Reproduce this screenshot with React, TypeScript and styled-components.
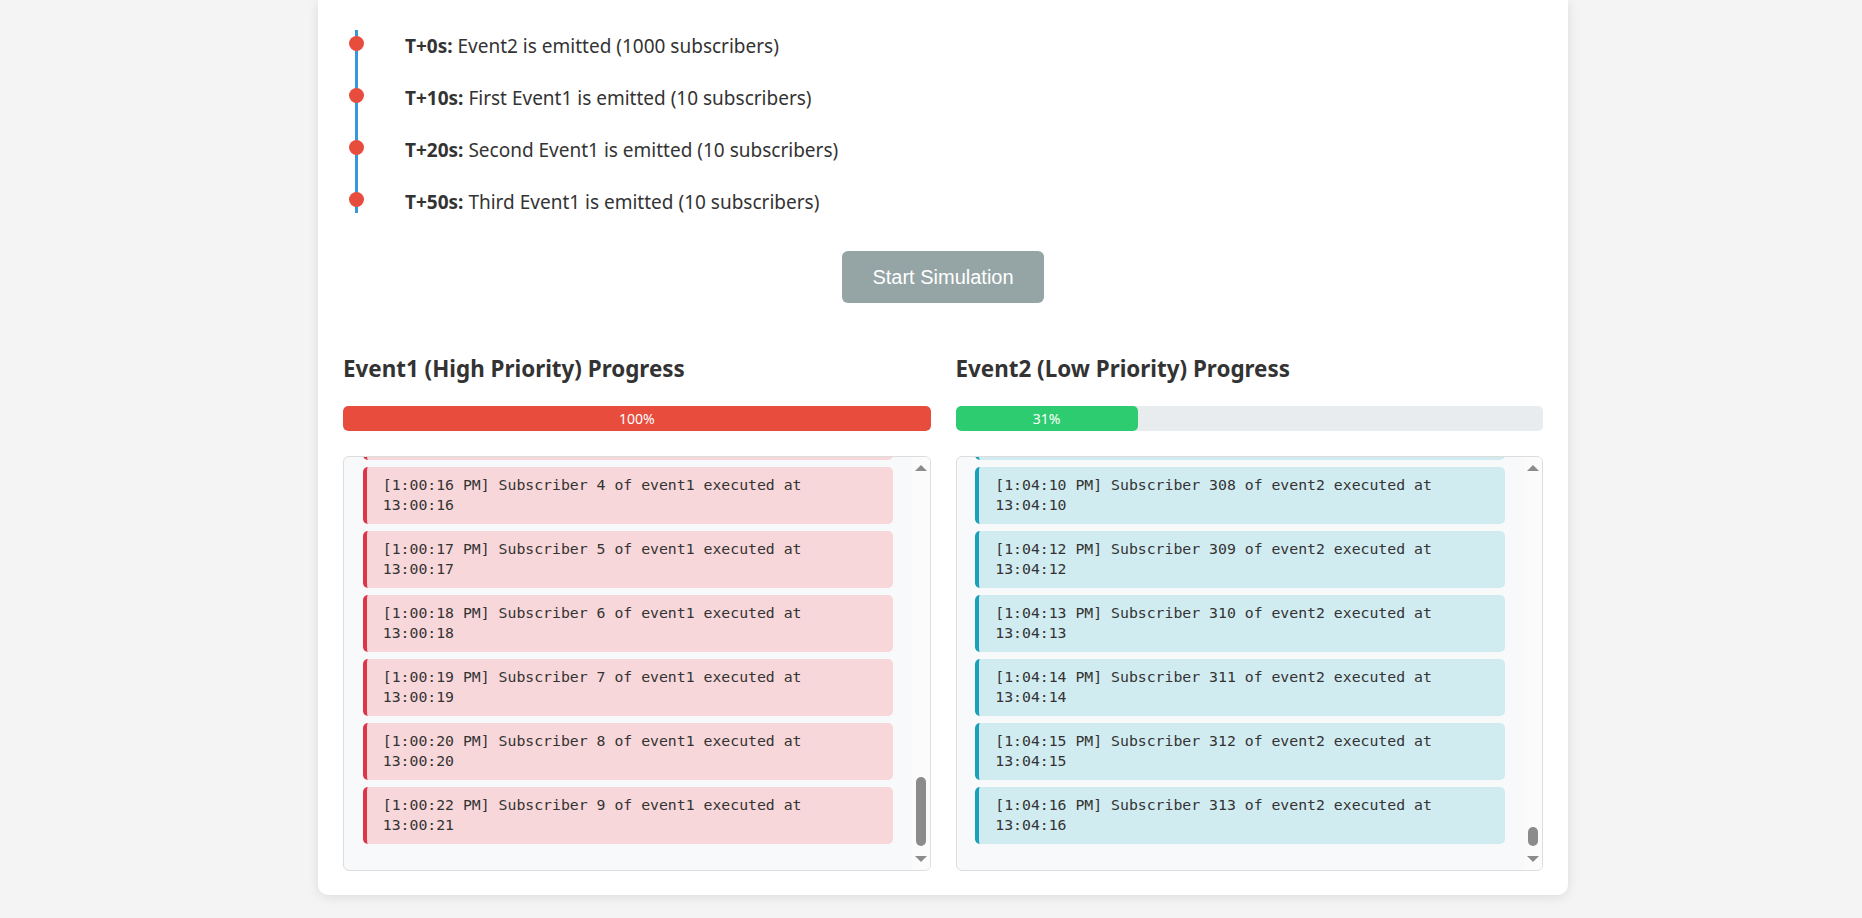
import { useLayoutEffect, useRef, useState } from 'react'
import styled, { createGlobalStyle } from 'styled-components'

type Priority = 'high' | 'low'

type LogLine = {
  id: number
  stamp: string
  sub: number
  exec: string
}

const pad = (n: number) => String(n).padStart(2, '0')

// seconds counted from 13:00:00
const clock12 = (sec: number) => {
  const total = 13 * 3600 + sec
  const h = Math.floor(total / 3600)
  const m = Math.floor((total % 3600) / 60)
  const s = total % 60
  const h12 = h % 12 === 0 ? 12 : h % 12
  return `${h12}:${pad(m)}:${pad(s)} ${h >= 12 ? 'PM' : 'AM'}`
}
const clock24 = (sec: number) => {
  const total = 13 * 3600 + sec
  const h = Math.floor(total / 3600)
  const m = Math.floor((total % 3600) / 60)
  const s = total % 60
  return `${pad(h)}:${pad(m)}:${pad(s)}`
}

const buildLog = (count: number, firstSub: number, tail: [number, number][], wrapAt?: number) => {
  const lines: LogLine[] = []
  const head = count - tail.length
  const start = tail[0][0]
  for (let i = 0; i < count; i++) {
    let logged: number
    let ran: number
    if (i >= head) {
      ;[logged, ran] = tail[i - head]
    } else {
      logged = start - (head - i)
      ran = logged
    }
    const sub = wrapAt ? (firstSub + i) % wrapAt : firstSub + i
    lines.push({ id: i, stamp: clock12(logged), sub, exec: clock24(ran) })
  }
  return lines
}

const event1Log = buildLog(34, 6, [
  [16, 16],
  [17, 17],
  [18, 18],
  [19, 19],
  [20, 20],
  [22, 21],
], 10)

const event2Log = buildLog(128, 186, [
  [250, 250],
  [252, 252],
  [253, 253],
  [254, 254],
  [255, 255],
  [256, 256],
])

const timeline = [
  { at: 'T+0s:', text: 'Event2 is emitted (1000 subscribers)' },
  { at: 'T+10s:', text: 'First Event1 is emitted (10 subscribers)' },
  { at: 'T+20s:', text: 'Second Event1 is emitted (10 subscribers)' },
  { at: 'T+50s:', text: 'Third Event1 is emitted (10 subscribers)' },
]

const panels = [
  { key: 'event1', title: 'Event1 (High Priority) Progress', percent: 100, color: '#e74c3c', priority: 'high' as Priority, log: event1Log },
  { key: 'event2', title: 'Event2 (Low Priority) Progress', percent: 31, color: '#2ecc71', priority: 'low' as Priority, log: event2Log },
]

const LogPanel = ({ priority, log, event }: { priority: Priority; log: LogLine[]; event: string }) => {
  const viewRef = useRef<HTMLDivElement>(null)
  const trackRef = useRef<HTMLDivElement>(null)
  const [thumb, setThumb] = useState(19)

  // keep the newest entries in view, like a live log
  useLayoutEffect(() => {
    const view = viewRef.current
    const track = trackRef.current
    if (!view || !track) return
    view.scrollTop = view.scrollHeight
    const size = (track.clientHeight * view.clientHeight) / view.scrollHeight
    setThumb(Math.max(19, Math.round(size)))
  }, [])

  return (
    <LogBox>
      <LogViewport ref={viewRef}>
        {log.map((l) => (
          <LogEntry key={l.id} $priority={priority}>
            [{l.stamp}] Subscriber {l.sub} of {event} executed at {l.exec}
          </LogEntry>
        ))}
      </LogViewport>
      <ScrollRail>
        <RailButton>
          <Arrow $dir="up" />
        </RailButton>
        <RailTrack ref={trackRef}>
          <RailThumb style={{ height: thumb }} />
        </RailTrack>
        <RailButton>
          <Arrow $dir="down" />
        </RailButton>
      </ScrollRail>
    </LogBox>
  )
}

export default function App() {
  return (
    <>
      <GlobalStyle />
      <Page>
        <Card>
          <Timeline>
            {timeline.map((t) => (
              <TimelineItem key={t.at}>
                <strong>{t.at}</strong> {t.text}
              </TimelineItem>
            ))}
          </Timeline>
          <ButtonRow>
            <StartButton disabled>Start Simulation</StartButton>
          </ButtonRow>
          <Columns>
            {panels.map((p) => (
              <Column key={p.key}>
                <PanelTitle>{p.title}</PanelTitle>
                <ProgressTrack>
                  <ProgressFill $color={p.color} style={{ width: `${p.percent}%` }}>
                    {p.percent}%
                  </ProgressFill>
                </ProgressTrack>
                <LogPanel priority={p.priority} log={p.log} event={p.key} />
              </Column>
            ))}
          </Columns>
        </Card>
      </Page>
    </>
  )
}

const GlobalStyle = createGlobalStyle`
  html, body {
    margin: 0;
    padding: 0;
    background: #f4f4f4;
  }
  body {
    font-family: 'Noto Sans', 'Open Sans', sans-serif;
    color: #333;
  }
`

const Page = styled.div`
  display: flex;
  justify-content: center;
  align-items: flex-start;
  padding-left: 24px;
  min-height: 918px;
  box-sizing: border-box;
`

const Card = styled.div`
  width: 1250px;
  box-sizing: border-box;
  background: #fff;
  border-radius: 0 0 10px 10px;
  box-shadow: 0 2px 12px rgba(0, 0, 0, 0.1);
  padding: 30px 25px 24px;
`

const Timeline = styled.ul`
  list-style: none;
  margin: 0;
  padding: 0 0 0 62px;
  position: relative;

  &::before {
    content: '';
    position: absolute;
    left: 12px;
    top: 0;
    bottom: 3px;
    width: 3px;
    background: #3498db;
  }
`

const TimelineItem = styled.li`
  position: relative;
  font-size: 19px;
  line-height: 28px;
  padding-top: 2px;
  margin-bottom: 22px;

  &:last-child {
    margin-bottom: 0;
  }

  &::before {
    content: '';
    position: absolute;
    left: -56px;
    top: 6px;
    width: 15px;
    height: 15px;
    border-radius: 50%;
    background: #e74c3c;
  }

  strong {
    font-weight: 700;
  }
`

const ButtonRow = styled.div`
  display: flex;
  justify-content: center;
  margin-top: 35px;
`

const StartButton = styled.button`
  font-family: 'Liberation Sans', Arial, sans-serif;
  font-size: 20px;
  line-height: 22px;
  padding: 15px 30px;
  border: none;
  border-radius: 6px;
  background: #95a5a6;
  color: #fff;
`

const Columns = styled.div`
  display: grid;
  grid-template-columns: 1fr 1fr;
  gap: 25px;
  margin-top: 52px;
`

const Column = styled.div`
  display: flex;
  flex-direction: column;
  min-width: 0;
`

const PanelTitle = styled.h3`
  margin: 0 0 23px;
  font-size: 22.4px;
  line-height: 28px;
  font-weight: 700;
  color: #333;
`

const ProgressTrack = styled.div`
  height: 25px;
  background: #e9ecef;
  border-radius: 5px;
  overflow: hidden;
`

const ProgressFill = styled.div<{ $color: string }>`
  height: 100%;
  background: ${(p) => p.$color};
  border-radius: 5px;
  color: #fff;
  font-size: 14px;
  display: flex;
  align-items: center;
  justify-content: center;
`

const LogBox = styled.div`
  margin-top: 25px;
  height: 415px;
  box-sizing: border-box;
  display: flex;
  border: 1px solid #ddd;
  border-radius: 6px;
  background: #f8f9fa;
  overflow: hidden;
`

const LogViewport = styled.div`
  flex: 1;
  min-width: 0;
  overflow: hidden;
  padding: 18.75px;
`

const LogEntry = styled.div<{ $priority: Priority }>`
  font-family: 'DejaVu Sans Mono', 'Liberation Mono', monospace;
  font-size: 14.8px;
  line-height: 20.5px;
  color: #333;
  padding: 8px 16px;
  margin-bottom: 7px;
  border-radius: 5px;
  border-left: 4px solid ${(p) => (p.$priority === 'high' ? '#dc3545' : '#17a2b8')};
  background: ${(p) => (p.$priority === 'high' ? '#f8d7da' : '#d1ecf1')};
`

const ScrollRail = styled.div`
  width: 18px;
  flex-shrink: 0;
  display: flex;
  flex-direction: column;
  background: #fbfbfb;
`

const RailButton = styled.div`
  height: 22px;
  display: flex;
  align-items: center;
  justify-content: center;
`

const Arrow = styled.div<{ $dir: 'up' | 'down' }>`
  width: 0;
  height: 0;
  border-left: 6px solid transparent;
  border-right: 6px solid transparent;
  ${(p) => (p.$dir === 'up' ? 'border-bottom: 6px solid #8b8b8b;' : 'border-top: 6px solid #8b8b8b;')}
`

const RailTrack = styled.div`
  flex: 1;
  display: flex;
  flex-direction: column;
  justify-content: flex-end;
  align-items: center;
  padding-bottom: 2px;
`

const RailThumb = styled.div`
  width: 10px;
  border-radius: 5px;
  background: #8b8b8b;
`
